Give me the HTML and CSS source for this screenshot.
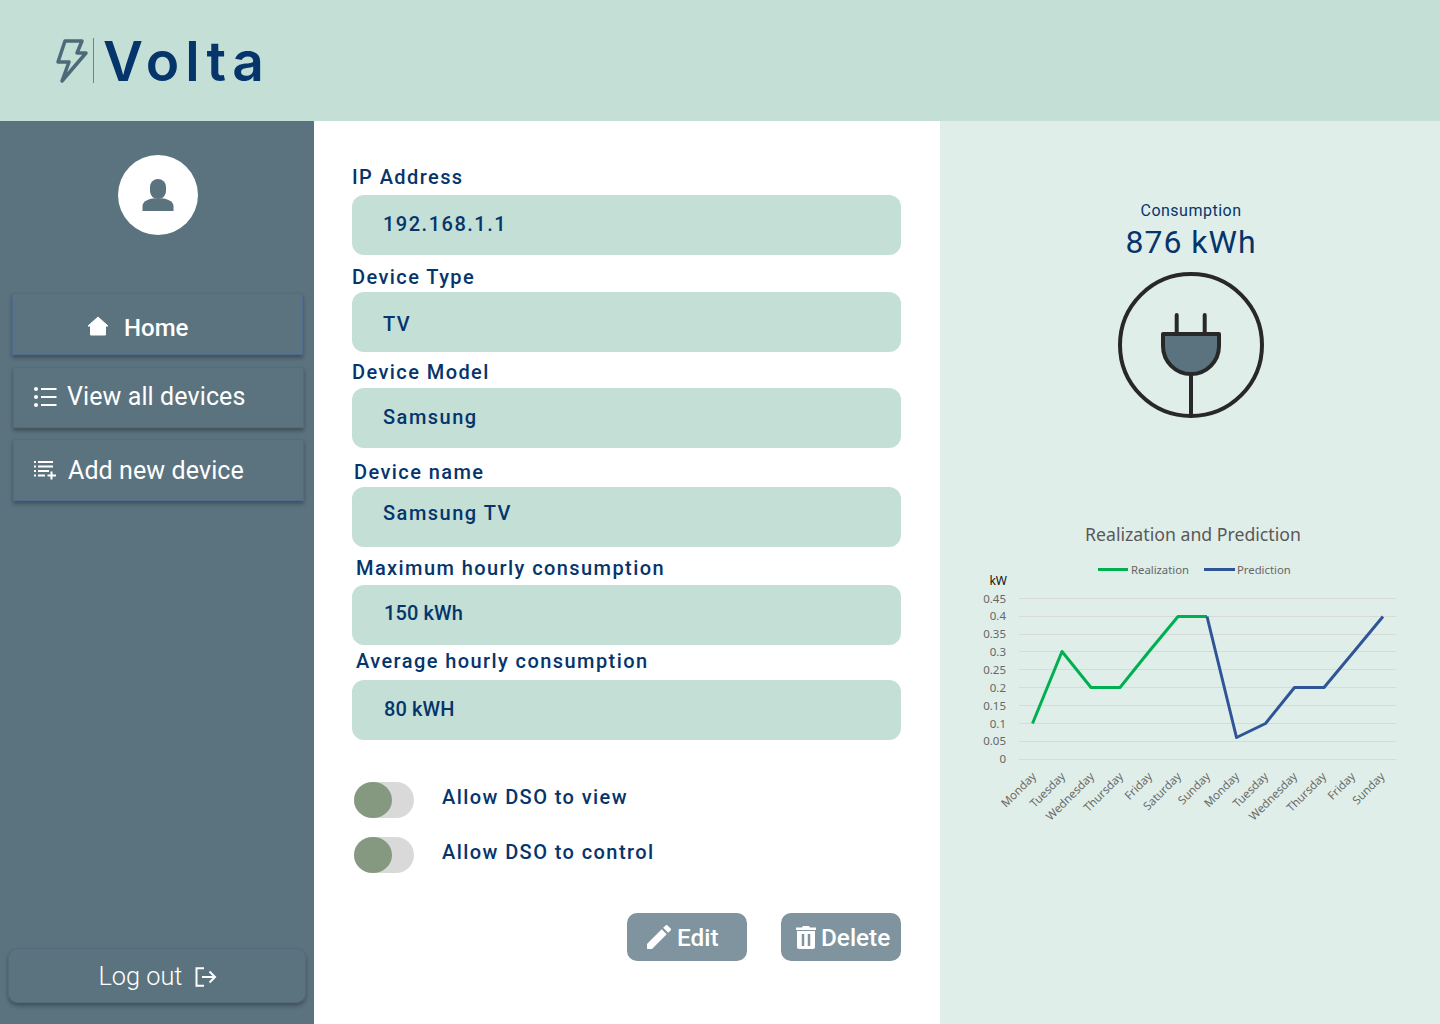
FILE: index.html
```html
<!DOCTYPE html>
<html lang="en">
<head>
  <meta charset="UTF-8" />
  <title>Volta</title>
  <link rel="stylesheet" href="styles.css">
</head>
<body>
  <header class="topbar">
    <svg class="bolt" width="32" height="46" viewBox="0 0 32 46">
      <path d="M9 3H26L21 15H30L6 43L13 24H2Z" fill="none" stroke="#4d6a79" stroke-width="3.500" stroke-linejoin="round"/>
    </svg>
    <span class="logo-line"></span>
    <span class="logo-text">Volta</span>
  </header>

  <div class="page">
    <aside class="sidebar">
      <div class="avatar">
        <svg width="32" height="33" viewBox="0 0 32 33">
          <path d="M8 8a8 8 0 0 1 16 0v4c0 3-2 6-4 7h-8c-2-1-4-4-4-7z" fill="#5b737f"/>
          <path d="M0.500 32v-5c0-5 7-8 15.500-8s15.500 3 15.500 8v5z" fill="#5b737f"/>
        </svg>
      </div>
      <nav class="nav">
        <a class="nav-item nav-home">
          <svg width="22" height="20" viewBox="0 0 22 20"><path d="M11 1L21 10H18.500V19H3.500V10H1Z" fill="#fff" stroke="#fff" stroke-width="1" stroke-linejoin="round"/></svg>
          <span class="home-label">Home</span>
        </a>
        <a class="nav-item nav-view">
          <svg width="24" height="20" viewBox="0 0 24 20">
            <g fill="#fff"><circle cx="3" cy="2" r="2"/><circle cx="3" cy="10" r="2"/><circle cx="3" cy="18" r="2"/></g>
            <path d="M8 2H23.500M8 10H23.500M8 18H23.500" stroke="#fff" stroke-width="2"/>
          </svg>
          View all devices
        </a>
        <a class="nav-item nav-add">
          <svg width="24" height="20" viewBox="0 0 24 20">
            <path d="M1 2H3M5 2H20M1 6.500H3M5 6.500H20M1 11H3M5 11H16M1 15.500H3M5 15.500H12" stroke="#fff" stroke-width="1.800"/>
            <path d="M18.500 11.500V19.500M14.500 15.500H23" stroke="#fff" stroke-width="2"/>
          </svg>
          Add new device
        </a>
      </nav>
      <a class="logout">
        Log out
        <svg width="22" height="20" viewBox="0 0 22 20">
          <path d="M9 1.200H1.500V18.800H9" fill="none" stroke="#fff" stroke-width="2"/>
          <path d="M7 10H20M14.500 4.500L20 10L14.500 15.500" fill="none" stroke="#fff" stroke-width="2"/>
        </svg>
      </a>
    </aside>

    <main class="details">
      <div class="field">
        <label>IP Address</label>
        <div class="value">192.168.1.1</div>
      </div>
      <div class="field">
        <label>Device Type</label>
        <div class="value">TV</div>
      </div>
      <div class="field">
        <label>Device Model</label>
        <div class="value">Samsung</div>
      </div>
      <div class="field">
        <label>Device name</label>
        <div class="value">Samsung TV</div>
      </div>
      <div class="field">
        <label>Maximum hourly consumption</label>
        <div class="value value-tight">150 kWh</div>
      </div>
      <div class="field">
        <label>Average hourly consumption</label>
        <div class="value value-tight">80 kWH</div>
      </div>

      <div class="toggles">
        <div class="toggle-row">
          <span class="toggle"><span class="knob"></span></span>
          <span class="toggle-label">Allow DSO to view</span>
        </div>
        <div class="toggle-row">
          <span class="toggle"><span class="knob"></span></span>
          <span class="toggle-label">Allow DSO to control</span>
        </div>
      </div>

      <div class="actions">
        <button class="action-btn btn-edit">
          <svg width="24" height="24" viewBox="3 3 18 18"><path d="M3 17.250V21h3.750L17.810 9.940l-3.750-3.750L3 17.250zM20.710 7.040a1 1 0 0 0 0-1.410l-2.340-2.340a1 1 0 0 0-1.410 0l-1.830 1.830 3.750 3.750 1.830-1.830z" fill="#fff"/></svg>
          Edit
        </button>
        <button class="action-btn btn-delete">
          <svg width="20" height="24" viewBox="0 0 20 24">
            <path d="M0 2.500H6L7 1H13L14 2.500H20V5H0Z" fill="#fff"/>
            <path d="M1 6H19V22a2 2 0 0 1-2 2H3a2 2 0 0 1-2-2Z" fill="#fff"/>
            <path d="M7 9V21M13 9V21" stroke="#7f949e" stroke-width="2.500"/>
          </svg>
          Delete
        </button>
      </div>
    </main>

    <section class="stats">
      <div class="stat-title">Consumption</div>
      <div class="stat-number">876 kWh</div>
      <svg class="plug" width="150" height="150" viewBox="0 0 150 150">
        <circle cx="75" cy="75" r="71" fill="none" stroke="#282828" stroke-width="4"/>
        <path d="M60.700 45V64M88.700 45V64" stroke="#282828" stroke-width="4" stroke-linecap="round"/>
        <path d="M47 64H103V76A28 28 0 0 1 47 76Z" fill="#5b737f" stroke="#282828" stroke-width="4" stroke-linejoin="round"/>
        <path d="M75 104V146" stroke="#282828" stroke-width="4"/>
      </svg>

      <svg class="chart" width="500" height="330" viewBox="940 510 500 330">
        <text class="chart-title" x="1193" y="541">Realization and Prediction</text>

        <path d="M1098 569.500H1128" stroke="#00b050" stroke-width="3"/>
        <text class="legend" x="1131" y="574">Realization</text>
        <path d="M1204 569.500H1235" stroke="#2f5597" stroke-width="3"/>
        <text class="legend" x="1237" y="574">Prediction</text>

        <g class="grid">
          <path d="M1019 598.500H1396"/>
          <path d="M1019 616.500H1396"/>
          <path d="M1019 634.500H1396"/>
          <path d="M1019 651.500H1396"/>
          <path d="M1019 669.500H1396"/>
          <path d="M1019 687.500H1396"/>
          <path d="M1019 705.500H1396"/>
          <path d="M1019 723.500H1396"/>
          <path d="M1019 741.500H1396"/>
          <path d="M1019 759.500H1396"/>
        </g>

        <g class="y-axis">
          <text class="y-unit" x="1007" y="585">kW</text>
          <text x="1006" y="603">0.45</text>
          <text x="1006" y="620">0.4</text>
          <text x="1006" y="638">0.35</text>
          <text x="1006" y="656">0.3</text>
          <text x="1006" y="674">0.25</text>
          <text x="1006" y="692">0.2</text>
          <text x="1006" y="710">0.15</text>
          <text x="1006" y="728">0.1</text>
          <text x="1006" y="745">0.05</text>
          <text x="1006" y="763">0</text>
        </g>

        <polyline class="line" stroke="#00b050" points="1032.500,723.500 1062,651.500 1091,687.500 1120,687.500 1149,651.500 1178,616.500 1207,616.500"/>
        <polyline class="line" stroke="#2f5597" points="1207,616.500 1236.500,737.500 1265.500,723.500 1294.500,687.500 1324,687.500 1354,651.500 1383,616.500"/>

        <g class="x-axis">
          <text transform="translate(1037,777) rotate(-45)">Monday</text>
          <text transform="translate(1066,777) rotate(-45)">Tuesday</text>
          <text transform="translate(1095,777) rotate(-45)">Wednesday</text>
          <text transform="translate(1124,777) rotate(-45)">Thursday</text>
          <text transform="translate(1153,777) rotate(-45)">Friday</text>
          <text transform="translate(1182,777) rotate(-45)">Saturday</text>
          <text transform="translate(1211,777) rotate(-45)">Sunday</text>
          <text transform="translate(1240,777) rotate(-45)">Monday</text>
          <text transform="translate(1269,777) rotate(-45)">Tuesday</text>
          <text transform="translate(1298,777) rotate(-45)">Wednesday</text>
          <text transform="translate(1327,777) rotate(-45)">Thursday</text>
          <text transform="translate(1356,777) rotate(-45)">Friday</text>
          <text transform="translate(1385.500,777) rotate(-45)">Sunday</text>
        </g>
      </svg>
    </section>
  </div>
</body>
</html>
```

FILE: styles.css
```css
* {
  box-sizing: border-box;
}
body {
  margin: 0;
  font-family: Roboto, "Liberation Sans", sans-serif;
  background-color: #fff;
  color: #06356b;
}

/* top bar */
.topbar {
  height: 121px;
  background-color: #c3dfd6;
  display: flex;
  align-items: center;
  padding-left: 56px;
}
.bolt {
  margin-top: 1px;
}
.logo-line {
  width: 1px;
  height: 45px;
  margin-left: 5px;
  background-color: #5b86a8;
}
.logo-text {
  margin-left: 9px;
  font-family: Inter, sans-serif;
  font-size: 55px;
  font-weight: 600;
  letter-spacing: 6px;
  line-height: 60px;
  color: #06356b;
}

.page {
  display: flex;
  height: 903px;
}

/* sidebar */
.sidebar {
  width: 314px;
  background-color: #5b737f;
  display: flex;
  flex-direction: column;
  color: #fff;
}
.avatar {
  width: 80px;
  height: 80px;
  margin: 34px 0 0 118px;
  border-radius: 50%;
  background-color: #fff;
  display: flex;
  align-items: center;
  justify-content: center;
}
.nav {
  margin-top: 58px;
  display: flex;
  flex-direction: column;
}
.nav-item {
  width: 291px;
  margin-left: 13px;
  display: flex;
  align-items: center;
  font-size: 25px;
  letter-spacing: 0.100px;
  border: 1px solid #4f6c8c;
  box-shadow: 0 3px 4px rgba(0, 0, 0, 0.3);
}
.nav-home {
  height: 62px;
  margin-left: 12px;
  padding-left: 74px;
  padding-top: 4px;
  gap: 15px;
}
.home-label {
  font-size: 24px;
  font-weight: 500;
  letter-spacing: 0;
  margin-top: 4px;
}
.nav-view {
  height: 61px;
  margin-top: 12px;
  padding-left: 19px;
  padding-bottom: 2px;
  gap: 10px;
}
.nav-add {
  height: 62px;
  margin-top: 11px;
  padding-left: 19px;
  gap: 11px;
}
.logout {
  width: 298px;
  height: 55px;
  margin: auto 0 21px 8px;
  padding-top: 2px;
  padding-left: 2px;
  border: 1px solid #4f6c78;
  border-radius: 10px;
  box-shadow: 0 3px 4px rgba(0, 0, 0, 0.3);
  display: flex;
  align-items: center;
  justify-content: center;
  gap: 13px;
  font-size: 25.300px;
  font-weight: 300;
}

/* middle column */
.details {
  width: 626px;
  padding: 45px 39px 0 38px;
}
.field label {
  display: block;
  font-size: 20px;
  font-weight: 500;
  line-height: 22px;
  letter-spacing: 1.420px;
}
.value {
  height: 60px;
  padding-left: 31px;
  border-radius: 12px;
  background-color: #c3dfd6;
  display: flex;
  align-items: center;
  font-size: 20px;
  font-weight: 500;
  letter-spacing: 1.500px;
}
.value-tight {
  padding-left: 32px;
  letter-spacing: 0.100px;
}
.field:nth-child(1) label { margin-bottom: 7px; }
.field:nth-child(1) .value { padding-bottom: 2px; }
.field:nth-child(2) { margin-top: 11px; }
.field:nth-child(2) label { margin-bottom: 4px; }
.field:nth-child(2) .value { padding-top: 4px; }
.field:nth-child(3) { margin-top: 9px; }
.field:nth-child(3) label { margin-bottom: 5px; }
.field:nth-child(3) .value { padding-bottom: 3px; }
.field:nth-child(4) { margin-top: 13px; }
.field:nth-child(4) label { margin: 0 0 4px 2px; }
.field:nth-child(4) .value { padding-bottom: 8px; }
.field:nth-child(5) { margin-top: 10px; }
.field:nth-child(5) label { margin: 0 0 6px 4px; }
.field:nth-child(5) .value { padding-bottom: 4px; }
.field:nth-child(6) { margin-top: 5px; }
.field:nth-child(6) label { margin: 0 0 8px 4px; }
.field:nth-child(6) .value { padding-bottom: 2px; }

.toggles {
  margin: 42px 0 0 2px;
  display: flex;
  flex-direction: column;
  gap: 19px;
}
.toggle-row {
  display: flex;
  align-items: center;
  gap: 28px;
}
.toggle {
  width: 60px;
  height: 36px;
  border-radius: 18px;
  background-color: #d9d9d9;
}
.knob {
  display: block;
  width: 38px;
  height: 36px;
  border-radius: 50%;
  background-color: #84997f;
}
.toggle-label {
  font-size: 20px;
  font-weight: 500;
  letter-spacing: 1.420px;
  margin-top: -6px;
}
.actions {
  margin-top: 40px;
  display: flex;
  justify-content: flex-end;
  gap: 34px;
}
.action-btn {
  width: 120px;
  height: 48px;
  border: none;
  border-radius: 10px;
  background-color: #7f949e;
  color: #fff;
  font-family: inherit;
  font-size: 24.300px;
  font-weight: 500;
  display: flex;
  align-items: center;
  padding: 0;
}
.btn-edit {
  padding-left: 20px;
  gap: 6px;
}
.btn-delete {
  padding-left: 15px;
  gap: 5px;
}

/* right column */
.stats {
  width: 500px;
  background-color: #e0eee9;
  padding-top: 80px;
  display: flex;
  flex-direction: column;
  align-items: center;
}
.stat-title {
  font-size: 16px;
  line-height: 20px;
  letter-spacing: 0.500px;
  margin-left: 2px;
}
.stat-number {
  font-size: 32px;
  line-height: 40px;
  letter-spacing: 1px;
  margin: 1px 0 0 2px;
}
.plug {
  margin: 8px 0 0 2px;
}
.chart {
  margin-top: 90px;
  font-family: "Noto Sans", "Open Sans", sans-serif;
}
.chart-title {
  font-size: 17.700px;
  fill: #595959;
  text-anchor: middle;
}
.legend {
  font-size: 11.300px;
  fill: #666;
}
.grid path {
  stroke: #d9d9d9;
  stroke-width: 1;
}
.y-axis text {
  font-size: 11.500px;
  fill: #666;
  text-anchor: end;
}
.y-axis .y-unit {
  font-size: 12px;
  fill: #111;
}
.x-axis text {
  font-size: 11.500px;
  fill: #6a6a6a;
  text-anchor: end;
}
.line {
  fill: none;
  stroke-width: 3;
  stroke-linejoin: round;
}
```
